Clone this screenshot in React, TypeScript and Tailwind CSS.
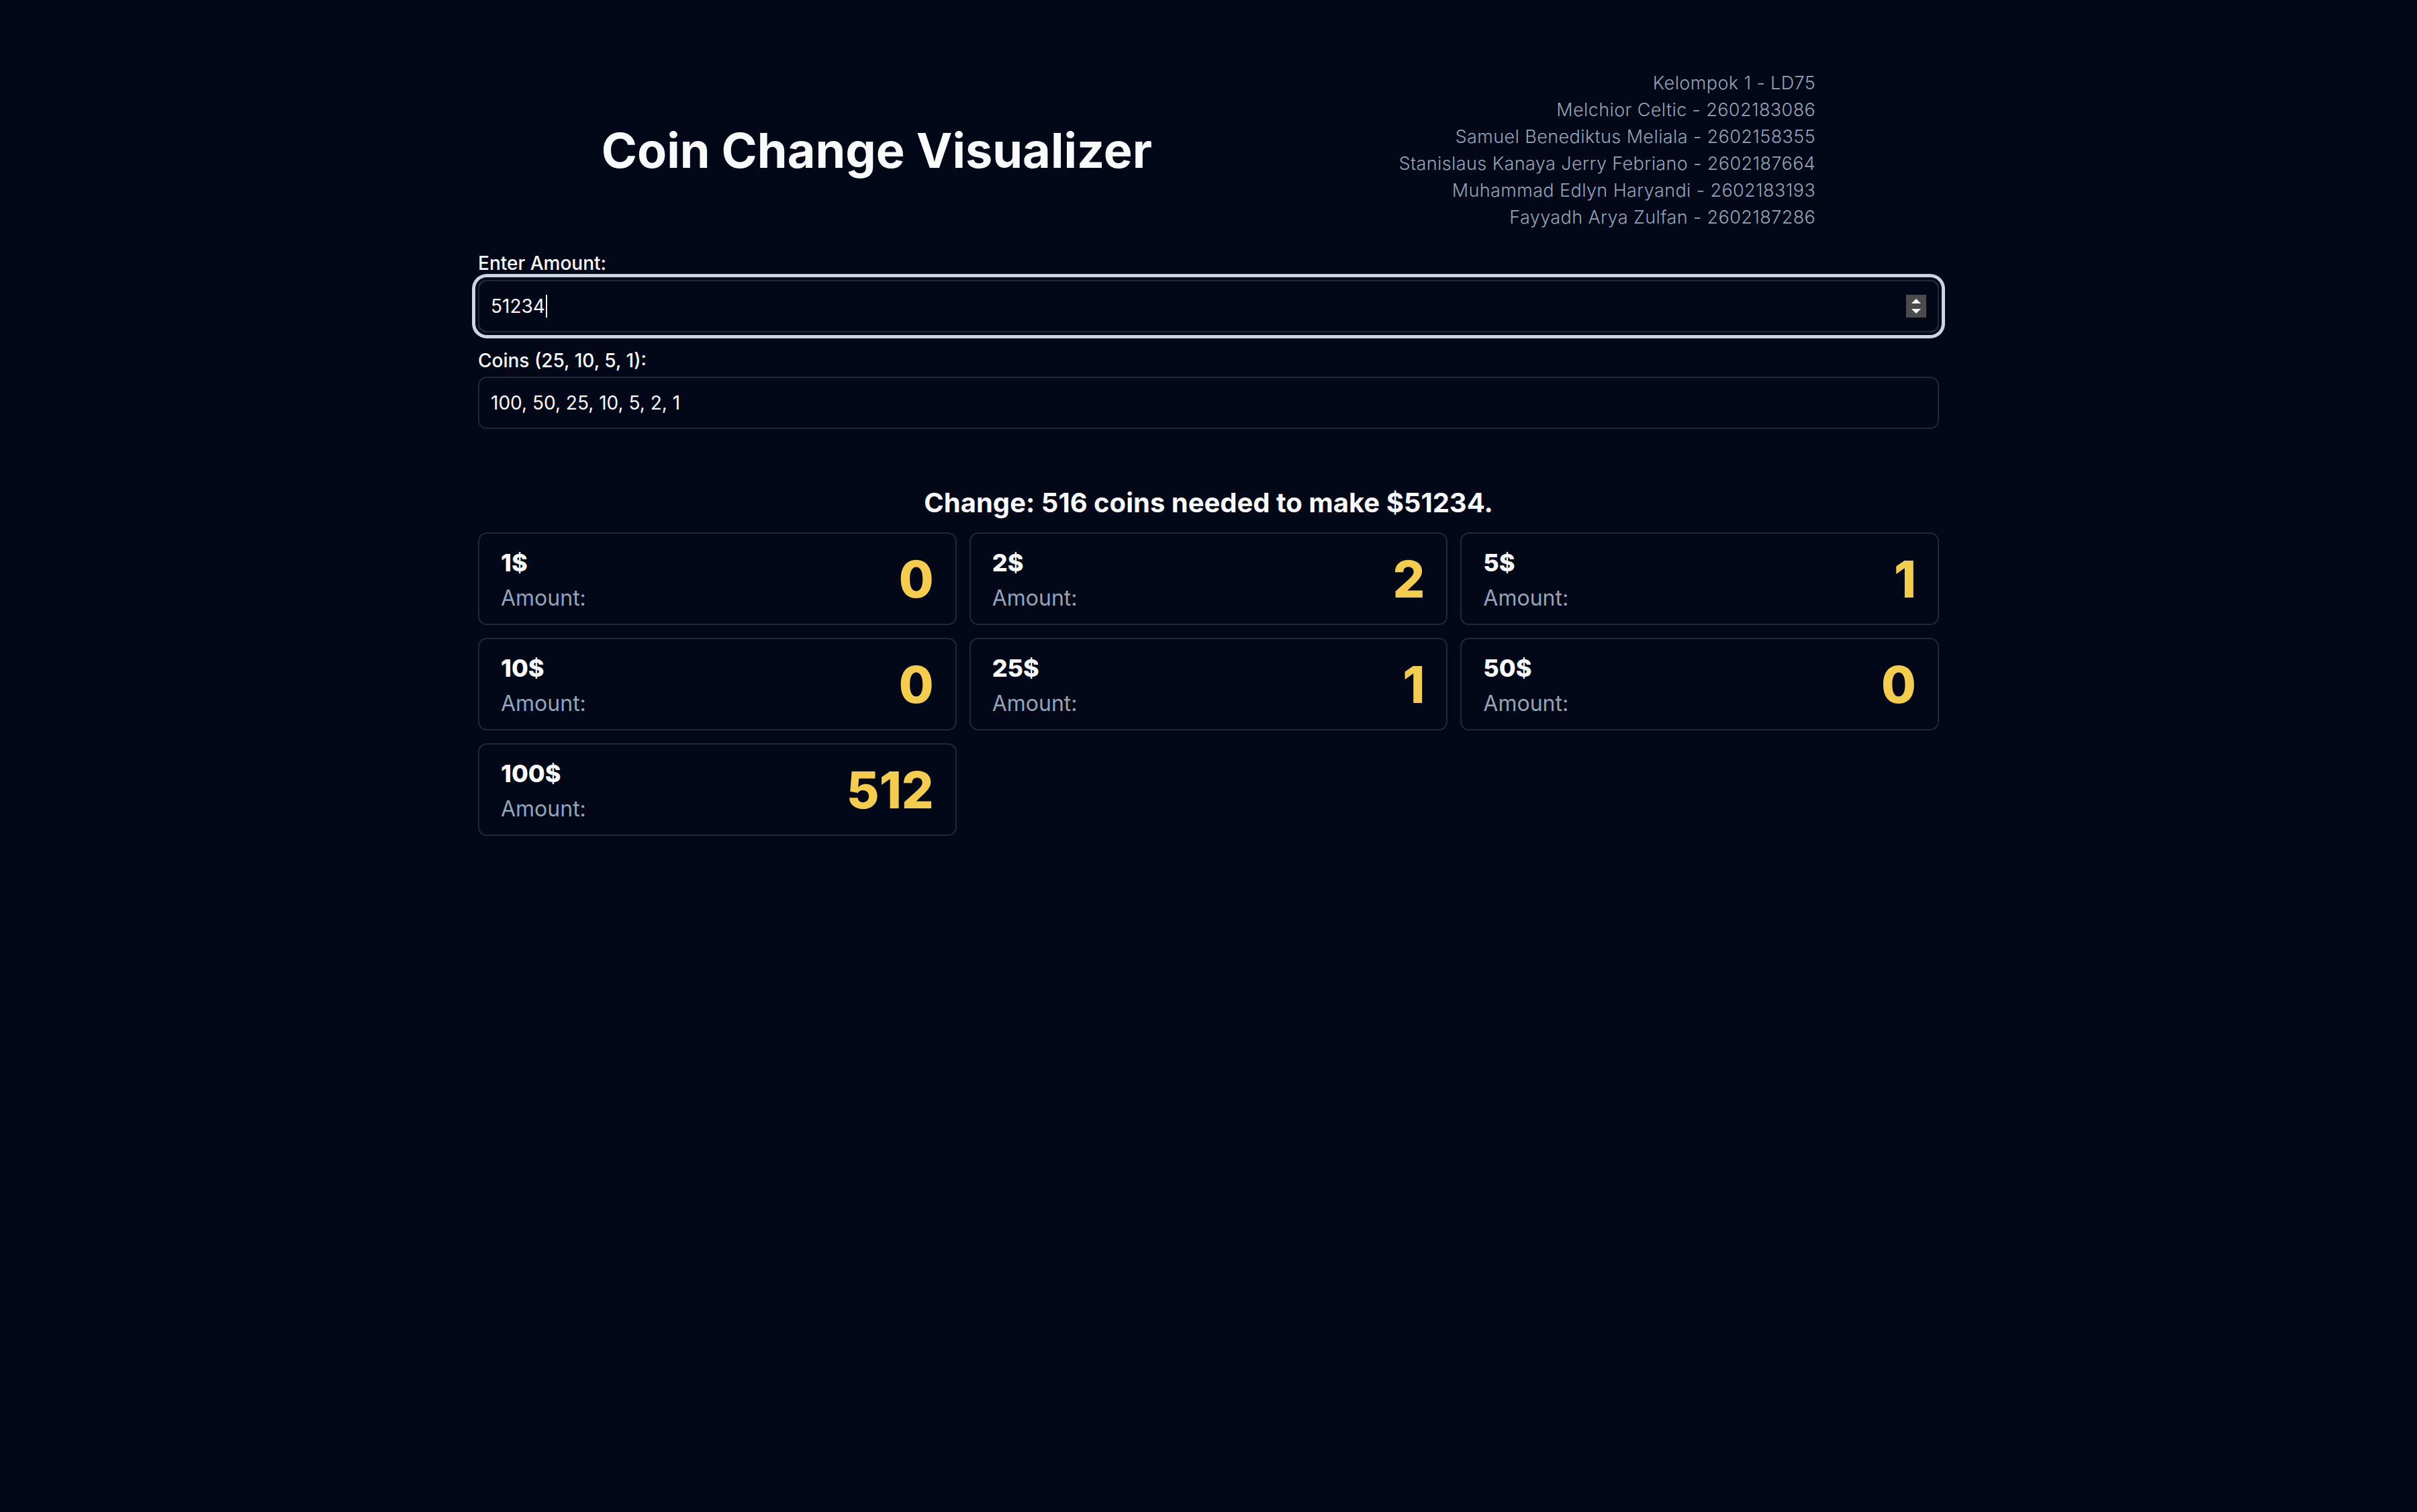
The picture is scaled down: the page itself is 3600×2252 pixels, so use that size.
const members = [
  "Kelompok 1 - LD75",
  "Melchior Celtic - 2602183086",
  "Samuel Benediktus Meliala - 2602158355",
  "Stanislaus Kanaya Jerry Febriano - 2602187664",
  "Muhammad Edlyn Haryandi - 2602183193",
  "Fayyadh Arya Zulfan - 2602187286",
];

const amount = 51234;
const coins = [100, 50, 25, 10, 5, 2, 1];

function makeChange(total: number, list: number[]) {
  const counts: Record<number, number> = {};
  let left = total;
  [...list].sort((a, b) => b - a).forEach((c) => {
    counts[c] = Math.floor(left / c);
    left = left % c;
  });
  return counts;
}

function Spinner() {
  return (
    <svg viewBox="0 0 30 34" className="absolute right-[17px] top-1/2 h-[34px] w-[30px] -translate-y-1/2">
      <rect width="30" height="34" fill="#4b4b4b" />
      <polygon points="8,13 22,13 15,6" fill="#ffffff" />
      <polygon points="8,21 22,21 15,28" fill="#ffffff" />
    </svg>
  );
}

export default function App() {
  const counts = makeChange(amount, coins);
  const total = Object.values(counts).reduce((a, b) => a + b, 0);
  const sorted = [...coins].sort((a, b) => a - b);

  return (
    <div className="min-h-screen bg-[#020817] font-['Inter',sans-serif] text-[#f8fafc]">
      <div className="mx-auto w-[2176px] pt-[104px]">
        <header className="flex items-center justify-around">
          <h1 className="text-[72px] font-bold leading-none">Coin Change Visualizer</h1>
          <div className="text-right text-[27px] font-light leading-[40px] tracking-[0.4px] text-[#94a3b8]">
            {members.map((m) => (
              <p key={m}>{m}</p>
            ))}
          </div>
        </header>

        <div className="mt-[32px]">
          <label className="block text-[28px] font-medium leading-[33px]">Enter Amount:</label>
          <div className="relative mt-[8px] flex h-[78px] items-center rounded-[13px] border-2 border-[#1e293b] px-[17px] text-[28px] ring-[5px] ring-[#cbd5e1] ring-offset-[4px] ring-offset-[#020817]">
            <span>{amount}</span>
            <span className="ml-[1px] h-[34px] w-[2px] bg-[#f8fafc]" />
            <Spinner />
          </div>

          <label className="mt-[26px] block text-[28px] font-medium leading-[33px]">Coins (25, 10, 5, 1):</label>
          <div className="mt-[7px] flex h-[78px] items-center rounded-[13px] border-2 border-[#1e293b] px-[17px] text-[28px]">
            {coins.join(", ")}
          </div>
        </div>

        <h2 className="mt-[82px] text-center text-[40px] font-bold leading-[56px]">
          Change: {total} coins needed to make ${amount}.
        </h2>

        <div className="mt-[16px] grid grid-cols-3 gap-[19px]">
          {sorted.map((c) => (
            <div
              key={c}
              className="flex h-[138px] items-center justify-between rounded-[13px] border-2 border-[#1e293b] px-[32px]"
            >
              <div className="self-start pt-[18px]">
                <p className="text-[36px] font-extrabold leading-[50px]">{c}$</p>
                <p className="mt-[3px] text-[32px] leading-[50px] text-[#94a3b8]">Amount:</p>
              </div>
              <span className="text-[75px] font-extrabold leading-none text-[#f3cd4b]">{counts[c]}</span>
            </div>
          ))}
        </div>
      </div>
    </div>
  );
}
